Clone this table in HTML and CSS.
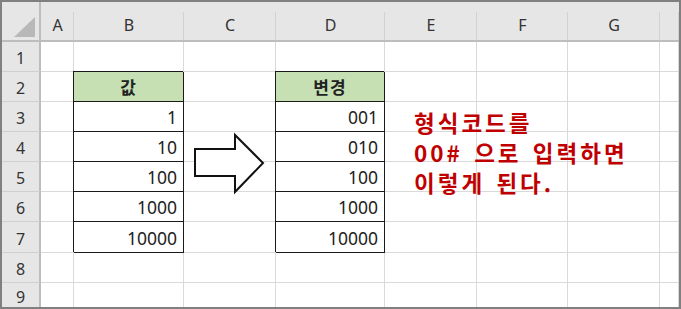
FILE: index.html
```html
<!DOCTYPE html>
<html lang="ko">
<head>
  <meta charset="UTF-8">
  <meta name="viewport" content="width=device-width, initial-scale=1.0">
  <title>형식코드 00#</title>
  <link rel="stylesheet" href="styles.css">
</head>
<body>
  <div class="frame">
    <div class="sheet">
      <!-- cabeçalho das colunas -->
      <div class="corner">
        <svg width="21" height="20" viewBox="0 0 21 20"><polygon points="21,0 21,20 0,20" fill="#b8b8b8"/></svg>
      </div>
      <div class="col-head">A</div>
      <div class="col-head">B</div>
      <div class="col-head">C</div>
      <div class="col-head">D</div>
      <div class="col-head">E</div>
      <div class="col-head">F</div>
      <div class="col-head">G</div>
      <div class="col-head"></div>

      <div class="row-head">1</div>
      <div class="cell"></div><div class="cell"></div><div class="cell"></div><div class="cell"></div>
      <div class="cell"></div><div class="cell"></div><div class="cell"></div><div class="cell"></div>

      <div class="row-head">2</div>
      <div class="cell"></div>
      <div class="cell boxed title">값</div>
      <div class="cell"></div>
      <div class="cell boxed title">변경</div>
      <div class="cell"></div><div class="cell"></div><div class="cell"></div><div class="cell"></div>

      <div class="row-head">3</div>
      <div class="cell"></div>
      <div class="cell boxed num">1</div>
      <div class="cell"></div>
      <div class="cell boxed num">001</div>
      <div class="cell"></div><div class="cell"></div><div class="cell"></div><div class="cell"></div>

      <div class="row-head">4</div>
      <div class="cell"></div>
      <div class="cell boxed num">10</div>
      <div class="cell"></div>
      <div class="cell boxed num">010</div>
      <div class="cell"></div><div class="cell"></div><div class="cell"></div><div class="cell"></div>

      <div class="row-head">5</div>
      <div class="cell"></div>
      <div class="cell boxed num">100</div>
      <div class="cell"></div>
      <div class="cell boxed num">100</div>
      <div class="cell"></div><div class="cell"></div><div class="cell"></div><div class="cell"></div>

      <div class="row-head">6</div>
      <div class="cell"></div>
      <div class="cell boxed num">1000</div>
      <div class="cell"></div>
      <div class="cell boxed num">1000</div>
      <div class="cell"></div><div class="cell"></div><div class="cell"></div><div class="cell"></div>

      <div class="row-head">7</div>
      <div class="cell"></div>
      <div class="cell boxed num">10000</div>
      <div class="cell"></div>
      <div class="cell boxed num">10000</div>
      <div class="cell"></div><div class="cell"></div><div class="cell"></div><div class="cell"></div>

      <div class="row-head">8</div>
      <div class="cell"></div><div class="cell"></div><div class="cell"></div><div class="cell"></div>
      <div class="cell"></div><div class="cell"></div><div class="cell"></div><div class="cell"></div>

      <div class="row-head">9</div>
      <div class="cell"></div><div class="cell"></div><div class="cell"></div><div class="cell"></div>
      <div class="cell"></div><div class="cell"></div><div class="cell"></div><div class="cell"></div>
    </div>

    <!-- seta de bloco entre as tabelas -->
    <svg class="arrow" width="76" height="64" viewBox="0 0 76 64">
      <polygon points="3,17 43,17 43,3 71,31 43,60 43,44 3,44" fill="#fff" stroke="#111" stroke-width="2" stroke-linejoin="miter"/>
    </svg>

    <div class="note">형식코드를<br>00# 으로 입력하면<br>이렇게 된다.</div>
  </div>
</body>
</html>
```

FILE: styles.css
```css
* {
  margin: 0;
  padding: 0;
  box-sizing: border-box;
}

body {
  font-family: 'Noto Sans', 'Noto Sans CJK KR', sans-serif;
  background-color: #fff;
  color: #222;
}

.frame {
  position: relative;
  width: 681px;
  height: 309px;
  border: 2px solid #808080;
  overflow: hidden;
}

.sheet {
  display: grid;
  grid-template-columns: 39px 33px 110px 92px 109px 92px 91px 92px 1fr;
  grid-template-rows: 40px 30px 30px 30px 30px 30px 30px 31px 30px 1fr;
  height: 100%;
}

.corner {
  background-color: #e6e6e6;
  border-right: 2px solid #bdbdbd;
  border-bottom: 2px solid #bdbdbd;
  display: flex;
  align-items: flex-end;
  justify-content: flex-end;
  padding: 0 4px 3px 0;
}

.col-head {
  background: linear-gradient(#d2d2d2, #d2d2d2) right 10px / 1px calc(100% - 10px) no-repeat, #e6e6e6;
  border-bottom: 2px solid #bdbdbd;
  display: flex;
  align-items: flex-end;
  justify-content: center;
  padding-bottom: 4px;
  font-size: 16px;
  color: #333;
}

.row-head {
  background-color: #e6e6e6;
  border-right: 2px solid #bdbdbd;
  border-bottom: 1px solid #d0d0d0;
  display: flex;
  align-items: center;
  justify-content: center;
  padding-top: 3px;
  font-size: 16px;
  color: #333;
}

.cell {
  border-right: 1px solid #d9d9d9;
  border-bottom: 1px solid #d9d9d9;
}

/* células com borda preta (tabelas B e D) */
.boxed {
  border-right-color: #1a1a1a;
  border-bottom-color: #1a1a1a;
  box-shadow: -1px -1px 0 #1a1a1a;
  background-color: #fff;
}

.title {
  background-color: #c6e0b4;
  display: flex;
  align-items: center;
  justify-content: center;
  font-family: 'Noto Sans CJK KR', sans-serif;
  font-weight: 700;
  font-size: 17px;
  letter-spacing: 1px;
}

.num {
  display: flex;
  align-items: flex-end;
  justify-content: flex-end;
  padding: 0 6px 4px 0;
  font-size: 17.5px;
  line-height: 20px;
}

.arrow {
  position: absolute;
  left: 190px;
  top: 130px;
}

.note {
  position: absolute;
  left: 412px;
  top: 105px;
  font-family: 'Noto Sans CJK KR', sans-serif;
  font-weight: 700;
  font-size: 22.5px;
  line-height: 30px;
  letter-spacing: 3px;
  word-spacing: 2px;
  color: #c00000;
  white-space: nowrap;
}
```
